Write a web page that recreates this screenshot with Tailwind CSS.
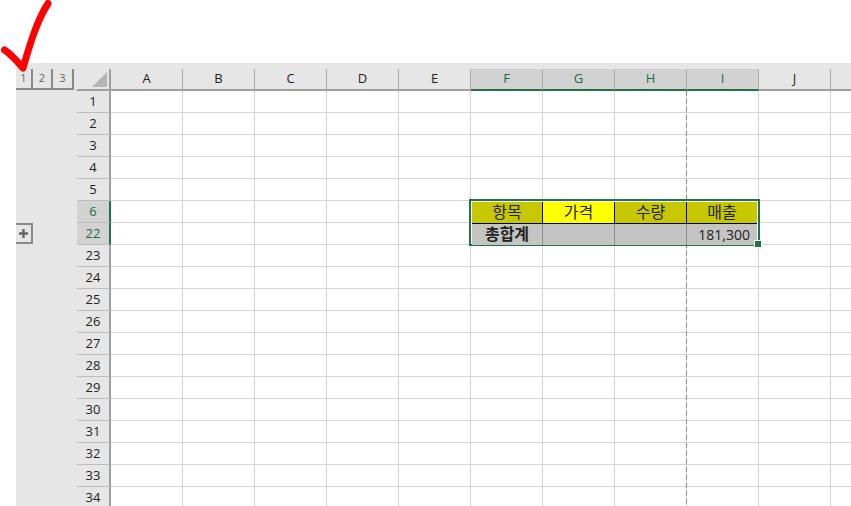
<!DOCTYPE html>
<html lang="ko">
<head>
    <meta charset="UTF-8">
    <title>Outline</title>
    <script src="https://cdn.jsdelivr.net/npm/@tailwindcss/browser@4"></script>
</head>
<body class="bg-white">
<div class="relative w-[851px] h-[506px] overflow-hidden font-['Open_Sans','Noto_Sans_CJK_KR',sans-serif] text-[13px] text-[#222]">

    <!-- check mark -->
    <svg class="absolute left-0 top-0 z-30" width="60" height="75" viewBox="0 0 60 75">
        <path d="M4.500 50 C11 54 17 61 23 68 C29 48 36 22 48 3.500" fill="none" stroke="#ff0000" stroke-width="7" stroke-linecap="round" stroke-linejoin="round"/>
    </svg>

    <div class="h-[63px]"></div>

    <div class="ml-[16px] bg-[#e6e6e6] h-[443px]">
        <!-- column header -->
        <div class="pt-[6px] flex h-[28px] w-max">
            <div class="w-[17px] h-[21px] shrink-0 border-r-2 border-b-2 border-[#8a8a8a] flex items-center justify-center text-[11px] text-[#666]">1</div>
            <div class="w-[20px] h-[21px] shrink-0 border-r-2 border-b-2 border-[#8a8a8a] flex items-center justify-center text-[11px] text-[#666]">2</div>
            <div class="w-[21px] h-[21px] shrink-0 border-r-2 border-b-2 border-[#8a8a8a] flex items-center justify-center text-[11px] text-[#666]">3</div>
            <div class="w-[3px] shrink-0"></div>
            <div class="w-[34px] h-[22px] shrink-0 border-r-2 border-b-2 border-[#9f9f9f] flex items-end justify-end pr-[2px] pb-[2px]">
                <svg width="15" height="15" viewBox="0 0 15 15"><path d="M15 0V15H0Z" fill="#b4b4b4"/></svg>
            </div>
            <div class="flex h-[22px]" id="cols"></div>
        </div>

        <div class="flex">
            <!-- outline gutter -->
            <div class="w-[61px] relative shrink-0">
                <div class="absolute left-0 top-[132px] w-[17px] h-[21px] border-y-2 border-r-2 border-[#8a8a8a] flex items-center justify-center">
                    <svg width="9" height="9" viewBox="0 0 9 9"><path d="M0 3.300H9V5.700H0ZM3.300 0H5.700V9H3.300Z" fill="#666"/></svg>
                </div>
            </div>
            <div class="flex-1" id="rows"></div>
        </div>
    </div>

    <!-- page break -->
    <svg class="absolute left-[686px] top-[91px] z-10" width="1" height="415"><line x1="0.500" y1="0" x2="0.500" y2="415" stroke="#8c8c8c" stroke-dasharray="5 3"/></svg>

    <!-- selected cells -->
    <div class="absolute left-[469px] top-[199px] w-[291px] h-[47px] border-2 border-[#217346] bg-white p-px z-20">
        <div class="grid grid-cols-[71px_72px_72px_70px] grid-rows-[22px_21px] h-full">
            <div class="bg-[#c8c800] border-r border-b border-black flex items-center justify-center pb-px text-[16px] text-[#222]">항목</div>
            <div class="bg-[#ffff00] border-r border-b border-black flex items-center justify-center pb-px text-[16px] text-[#222]">가격</div>
            <div class="bg-[#c8c800] border-r border-b border-black flex items-center justify-center pb-px text-[16px] text-[#222]">수량</div>
            <div class="bg-[#c8c800] border-b border-black flex items-center justify-center pb-px text-[16px] text-[#222]">매출</div>
            <div class="bg-[#c4c4c4] border-r border-[#8f8f8f] flex items-center justify-center pb-px text-[16px] font-bold text-[#222]">총합계</div>
            <div class="bg-[#c4c4c4] border-r border-[#8f8f8f]"></div>
            <div class="bg-[#c4c4c4] border-r border-[#8f8f8f]"></div>
            <div class="bg-[#c4c4c4] flex items-center justify-end pr-[7px] pb-px text-[14px] text-[#222]">181,300</div>
        </div>
        <div class="absolute right-[-3px] bottom-[-3px] w-[6px] h-[6px] bg-[#217346] outline outline-white"></div>
    </div>

    <script>
        // columns
        const selCols = 'FGHI';
        document.getElementById('cols').innerHTML = 'ABCDEFGHIJK'.split('').map(c => {
            const sel = selCols.includes(c);
            return `<div class="w-[72px] shrink-0 flex items-center justify-center border-r border-[#ababab] border-b-2 ${sel ? 'bg-[#d2d2d2] border-b-[#217346] text-[#1c6b45]' : 'border-b-[#9f9f9f] text-[#222]'}">${c === 'K' ? '' : c}</div>`;
        }).join('');

        // rows, 6 and 22 sit next to each other because 7-21 are collapsed
        const nums = [1,2,3,4,5,6,22];
        for (let i = 23; i <= 34; i++) nums.push(i);
        document.getElementById('rows').innerHTML = nums.map(n => {
            const sel = n === 6 || n === 22;
            let cells = '';
            for (let i = 0; i < 11; i++) cells += '<div class="w-[72px] shrink-0 bg-white border-r border-b border-[#d4d4d4]"></div>';
            return `<div class="flex h-[22px]">
                <div class="w-[34px] shrink-0 flex items-center justify-center pt-px border-b border-[#bdbdbd] border-r-2 ${sel ? 'bg-[#d2d2d2] border-r-[#217346] text-[#1c6b45]' : 'border-r-[#9f9f9f] text-[#222]'}">${n}</div>
                ${cells}
            </div>`;
        }).join('');
    </script>
</div>
</body>
</html>
